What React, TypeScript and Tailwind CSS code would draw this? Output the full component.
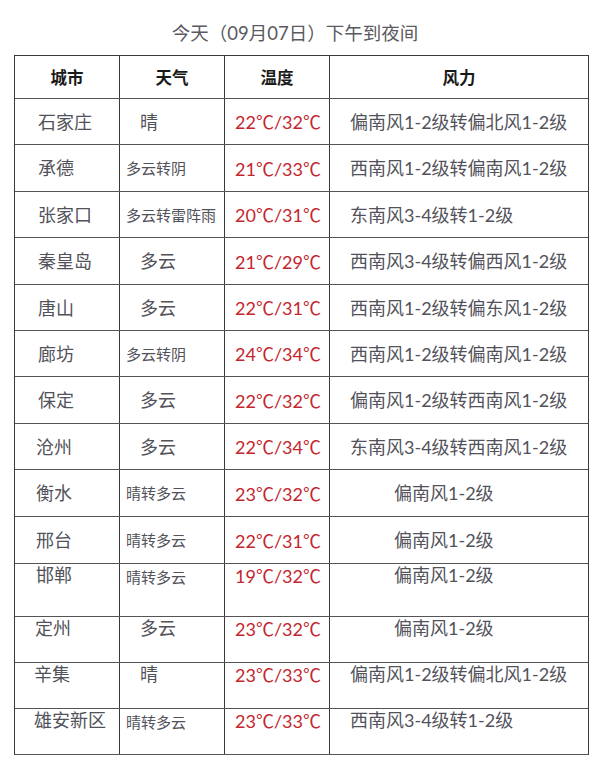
import React from "react";

type Row = {
  city: string;
  cityPad: string;
  weather: string;
  small: boolean;
  temp: [string, string];
  wind: string;
  short: boolean;
  h: string;
  top: boolean;
};

const rows: Row[] = [
  { city: "石家庄", cityPad: "pl-[23px]", weather: "晴", small: false, temp: ["22", "32"], wind: "偏南风1-2级转偏北风1-2级", short: false, h: "h-[46px]", top: false },
  { city: "承德", cityPad: "pl-[23px]", weather: "多云转阴", small: true, temp: ["21", "33"], wind: "西南风1-2级转偏南风1-2级", short: false, h: "h-[47px]", top: false },
  { city: "张家口", cityPad: "pl-[23px]", weather: "多云转雷阵雨", small: true, temp: ["20", "31"], wind: "东南风3-4级转1-2级", short: false, h: "h-[46px]", top: false },
  { city: "秦皇岛", cityPad: "pl-[23px]", weather: "多云", small: false, temp: ["21", "29"], wind: "西南风3-4级转偏西风1-2级", short: false, h: "h-[47px]", top: false },
  { city: "唐山", cityPad: "pl-[23px]", weather: "多云", small: false, temp: ["22", "31"], wind: "西南风1-2级转偏东风1-2级", short: false, h: "h-[46px]", top: false },
  { city: "廊坊", cityPad: "pl-[23px]", weather: "多云转阴", small: true, temp: ["24", "34"], wind: "西南风1-2级转偏南风1-2级", short: false, h: "h-[46px]", top: false },
  { city: "保定", cityPad: "pl-[23px]", weather: "多云", small: false, temp: ["22", "32"], wind: "偏南风1-2级转西南风1-2级", short: false, h: "h-[47px]", top: false },
  { city: "沧州", cityPad: "pl-[21px]", weather: "多云", small: false, temp: ["22", "34"], wind: "东南风3-4级转西南风1-2级", short: false, h: "h-[46px]", top: false },
  { city: "衡水", cityPad: "pl-[21px]", weather: "晴转多云", small: true, temp: ["23", "32"], wind: "偏南风1-2级", short: true, h: "h-[47px]", top: false },
  { city: "邢台", cityPad: "pl-[21px]", weather: "晴转多云", small: true, temp: ["22", "31"], wind: "偏南风1-2级", short: true, h: "h-[47px]", top: false },
  { city: "邯郸", cityPad: "pl-[21px]", weather: "晴转多云", small: true, temp: ["19", "32"], wind: "偏南风1-2级", short: true, h: "h-[53px]", top: true },
  { city: "定州", cityPad: "pl-[20px]", weather: "多云", small: false, temp: ["23", "32"], wind: "偏南风1-2级", short: true, h: "h-[46px]", top: true },
  { city: "辛集", cityPad: "pl-[19px]", weather: "晴", small: false, temp: ["23", "33"], wind: "偏南风1-2级转偏北风1-2级", short: false, h: "h-[46px]", top: true },
  { city: "雄安新区", cityPad: "pl-[19px]", weather: "晴转多云", small: true, temp: ["23", "33"], wind: "西南风3-4级转1-2级", short: false, h: "h-[46px]", top: true },
];

function Deg() {
  return <span style={{ fontFamily: '"Noto Sans CJK SC", sans-serif' }}>℃</span>;
}

export default function App() {
  return (
    <div
      className="w-[600px] h-[775px] bg-white text-[#52525a]"
      style={{ fontFamily: '"Lato", "Noto Sans CJK SC", sans-serif' }}
    >
      <div className="pt-[20px] h-[55px] flex justify-center">
        <div className="text-[18.5px] leading-[26px] text-[#5a5a5f] -ml-[10px]">
          今天（09月07日）下午到夜间
        </div>
      </div>
      <div className="ml-[14px] w-[575px] border border-[#3a3a3a] border-b-0">
        <div className="grid grid-cols-[105px_105px_105px_258px] h-[43px] border-b border-[#555]">
          {["城市", "天气", "温度", "风力"].map((t, i) => (
            <div
              key={t}
              className={`flex items-center justify-center font-bold text-[16.5px] text-[#1a1a1a] ${i < 3 ? "border-r border-[#3a3a3a]" : ""}`}
              style={{ fontFamily: '"Noto Sans CJK SC", sans-serif' }}
            >
              {t}
            </div>
          ))}
        </div>
        {rows.map((r) => {
          const align = r.top ? "items-start pt-[1px]" : "items-center";
          return (
            <div
              key={r.city}
              className={`grid grid-cols-[105px_105px_105px_258px] ${r.h} border-b border-[#555]`}
            >
              <div className={`flex ${align} ${r.cityPad} border-r border-[#3a3a3a] text-[18px] leading-[20px]`}>
                {r.city}
              </div>
              <div
                className={`flex ${align} border-r border-[#3a3a3a] leading-[20px] ${r.small ? "pl-[6px] text-[15px]" : "pl-[20px] text-[18px]"} ${r.top && r.small ? "pt-[3px]" : ""}`}
              >
                {r.weather}
              </div>
              <div className={`flex ${align} pl-[10px] border-r border-[#3a3a3a] text-[18px] leading-[20px] text-[#c4262e] whitespace-nowrap`}>
                <span>
                  {r.temp[0]}
                  <Deg />/{r.temp[1]}
                  <Deg />
                </span>
              </div>
              <div
                className={`flex ${align} leading-[20px] text-[18px] whitespace-nowrap ${r.short ? "pl-[64px]" : "pl-[20px]"}`}
              >
                {r.wind}
              </div>
            </div>
          );
        })}
      </div>
    </div>
  );
}
